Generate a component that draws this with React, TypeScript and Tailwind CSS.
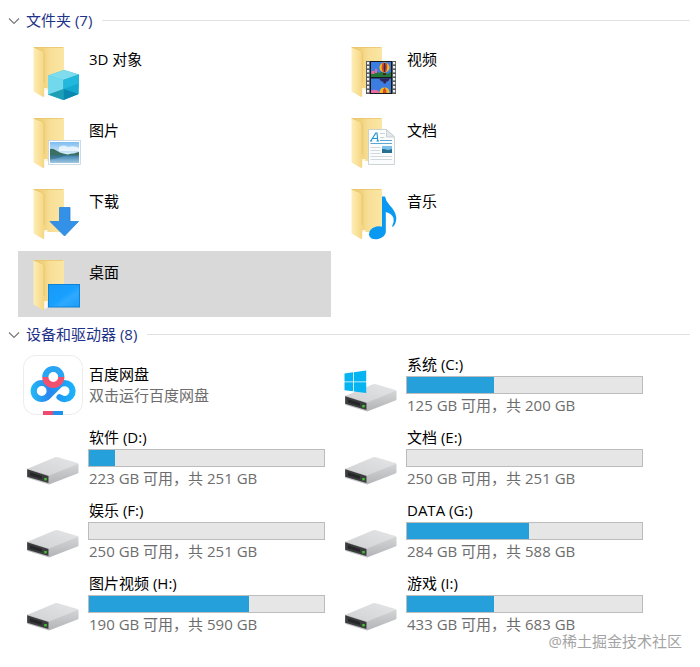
import { useState, type ReactNode } from 'react';

type Folder = { name: string; overlay: ReactNode; selected?: boolean };
type Drive = { name: string; free: number; total: number; used: number; system?: boolean };

function FolderIcon({ children }: { children: ReactNode }) {
  return (
    <svg viewBox="0 0 60 66" className="h-[66px] w-[60px] shrink-0" aria-hidden="true">
      <defs>
        <linearGradient id="folderBack" x1="0" y1="0" x2="1" y2="0">
          <stop offset=".3" stopColor="#f1d27c" />
          <stop offset=".55" stopColor="#f8df98" />
          <stop offset="1" stopColor="#fbe6a4" />
        </linearGradient>
        <linearGradient id="folderFlap" x1="0" y1="0" x2="1" y2="0">
          <stop offset="0" stopColor="#fdedb8" />
          <stop offset=".45" stopColor="#fae29b" />
          <stop offset="1" stopColor="#f4d27c" />
        </linearGradient>
      </defs>
      <path d="M11 9h29.200a.8.8 0 0 1 .8.8V52H11z" fill="url(#folderBack)" />
      <path d="M11 9h29.200v.8H12z" fill="#e8c56b" />
      <path d="M20 50h4.500v6.500l-3.500 2z" fill="#fff" opacity=".8" />
      <path d="M10.500 9.200 19 12.500q2.200 1 2.200 3V45q0 1.500 1.300 2.500-1.300 1.500-1.300 3V58q0 1.600-1.500.8l-8.300-4.700q-.9-.5-.9-1.600z" fill="url(#folderFlap)" />
      <path d="M10.500 9.200 19 12.500q2.200 1 2.200 3V45" fill="none" stroke="#e6c266" strokeWidth=".7" />
      {children}
    </svg>
  );
}

function CubeOverlay() {
  return (
    <g>
      <path d="M25 37.500 41 32l15 4.500L55.500 56 40 62 25 56.500z" fill="#35bfdc" />
      <path d="M25 37.500 41 32l15 4.500L40.500 42z" fill="#7fdcec" />
      <path d="M25 37.500 40.500 42v20L25 56.500z" fill="#72d8ec" />
      <path d="M40.500 42 56 36.500 55.500 56l-15 6z" fill="#12a8cf" />
      <path d="M25 56.500 40.500 51v11z" fill="#1c9eb4" />
      <path d="M40.500 51 55.500 56l-15 6z" fill="#0a87ae" />
      <path d="M40.500 42 56 36.500v9L40.500 51z" fill="#22b7dc" />
    </g>
  );
}

function PictureOverlay() {
  return (
    <g>
      <defs>
        <linearGradient id="sky" x1="0" y1="0" x2="0" y2="1">
          <stop offset="0" stopColor="#7dbdf0" />
          <stop offset="1" stopColor="#dcf0fb" />
        </linearGradient>
        <linearGradient id="lake" x1="0" y1="0" x2="0" y2="1">
          <stop offset="0" stopColor="#3f84b0" />
          <stop offset="1" stopColor="#9fc9e4" />
        </linearGradient>
      </defs>
      <rect x="25.500" y="31.500" width="32" height="24" fill="#fff" stroke="#c3d3dc" strokeWidth=".8" />
      <rect x="27" y="33" width="29" height="13" fill="url(#sky)" />
      <path d="M36 38q5-3 9 0 6-2 11 1v3H36z" fill="#fff" opacity=".7" />
      <path d="M27 47v-7q3-1 5 .8l5 2.700q4 1.500 8 2 4-1.500 6-1 3-1.200 5-1.500V47H27z" fill="#3b6f62" />
      <rect x="27" y="46.500" width="29" height="7.500" fill="url(#lake)" />
      <path d="M27 46.500h15q-6 3-15 4z" fill="#2c6078" opacity=".5" />
    </g>
  );
}

function DownloadOverlay() {
  return <path d="M36.500 27.500h10.500V41.500h8.500L41.500 56 27 41.500h9.500z" fill="#3391e8" stroke="#2883d8" strokeWidth=".8" />;
}

function DesktopOverlay() {
  return (
    <g>
      <defs>
        <linearGradient id="screen" x1="0" y1="0" x2="1" y2="1">
          <stop offset="0" stopColor="#1899f8" />
          <stop offset=".5" stopColor="#18a0ff" />
          <stop offset=".65" stopColor="#2fa9ff" />
          <stop offset="1" stopColor="#189cfa" />
        </linearGradient>
      </defs>
      <rect x="25.500" y="33.500" width="31" height="22.500" fill="url(#screen)" stroke="#0f82d3" />
    </g>
  );
}

function Balloon({ y }: { y: number }) {
  return (
    <g transform={`translate(0 ${y})`}>
      <rect x="30" y="0" width="20" height="15" fill="#3b7de0" />
      <path d="M30 11.500q4-3 8-.5 3-2 5 0t7-1v5H30z" fill="#24783a" />
      <path d="M30.500 9h3v3h-3zM34 7h2v4h-2z" fill="#e66aa3" />
      <circle cx="43.500" cy="5.500" r="5" fill="#f2bd20" />
      <path d="M41.500 1q-2 5 .6 9.200h2.800Q47.500 5 45.500 1z" fill="#d8492c" />
      <path d="M43 1q-.8 5 .2 9h.8q1-4 .2-9z" fill="#30275f" />
      <path d="M42 11h3v2h-3z" fill="#48270f" />
    </g>
  );
}

function VideoOverlay() {
  const holes = [25, 29, 33, 37, 41, 45, 49, 53];
  return (
    <g>
      <rect x="25" y="23" width="30" height="33" fill="#575b5e" />
      <rect x="29" y="23" width="22" height="33" fill="#16191d" />
      {holes.map((y) => (
        <g key={y} fill="#f0f2f2">
          <rect x="26" y={y - 1} width="2.200" height="2.400" />
          <rect x="52" y={y - 1} width="2.200" height="2.400" />
        </g>
      ))}
      <Balloon y={24} />
      {/* second frame is cut between two balloons */}
      <rect x="30" y="40.500" width="20" height="14.500" fill="#3b7de0" />
      <path d="M38 40.500h11q-1 2.500-4 3.500v1.500h-2.500V44q-3.500-1-4.500-3.500z" fill="#30275f" />
      <path d="M30 52.500q3-1.500 7 0l2 2.500h-9z" fill="#e66aa3" />
      <path d="M38.500 55q0-5.500 5-5.500t5 5.500z" fill="#f2bd20" />
      <path d="M41.800 55q0-4 1.700-5.500 2 1.500 2 5.500z" fill="#d8492c" />
    </g>
  );
}

function DocumentOverlay() {
  return (
    <g>
      <path d="M27.500 20.500h18L53.500 28v27.500h-26z" fill="#fafcfd" stroke="#c2c9cc" strokeWidth=".8" />
      <path d="M45.500 20.500V28h8z" fill="#e2e7ea" stroke="#c2c9cc" strokeWidth=".8" />
      <path d="m29.800 32 5-8h1.200l.8 8M31.500 29.500h5M29 32h2.200M35.500 32H38" fill="none" stroke="#1e91cd" strokeWidth="1.100" />
      <path d="M39 24.500h5M39 28.500h4.500" stroke="#cbd3d7" />
      <path d="M39 31.500h12M29.500 34.500H51" stroke="#5ba8d3" />
      <path d="M29.500 38.500h10M29.500 41.500h10M29.500 44.500h10M29.500 47.500H51M29.500 50.500H51" stroke="#d2d8db" />
      <rect x="41" y="37" width="10" height="7" fill="#79bfe9" />
      <path d="M41 40q3-.5 5 1 3 0 5-1v4H41z" fill="#276f91" />
    </g>
  );
}

function MusicOverlay() {
  return (
    <path
      d="M41 16.500h3q.8 4.500 4.500 8.500 6.300 6.500 6.800 12.500.2 5.800-3.300 9.300-1 .3-.8-.8 2.200-4.500 1.300-8-1.700-4.500-7.700-6V52q-.5 5-7.500 7-8 1.200-9.300-4-.5-6.500 7.500-8.500 3-.8 5.500.2z"
      fill="#0a99f2"
    />
  );
}

function DriveIcon({ system }: { system?: boolean }) {
  return (
    <svg viewBox="0 0 60 68" className="h-[68px] w-[60px] shrink-0" aria-hidden="true">
      <defs>
        <linearGradient id="driveTop" x1="0" y1="1" x2="1" y2="0">
          <stop offset="0" stopColor="#d0d1d3" />
          <stop offset="1" stopColor="#e4e5e7" />
        </linearGradient>
        <linearGradient id="driveSide" x1="0" y1="0" x2="0" y2="1">
          <stop offset="0" stopColor="#d3d4d6" />
          <stop offset="1" stopColor="#b2b4b7" />
        </linearGradient>
      </defs>
      <path d="M4 44 32 32.300q1.500-.5 3 0L54.500 38q1 .4 1 1.500L26 51z" fill="url(#driveTop)" />
      <path d="M26 50.500 54.500 39q1-.2 1 1v7.200q0 1-1 1.400L26 59.500z" fill="url(#driveSide)" />
      <path d="M4 43.500 26 50.500v9L4.800 53q-.8-.3-.8-1z" fill="#bfc0c2" />
      <path d="M4.200 44.200 25.500 51v7L4.200 51.800z" fill="#3a3c3e" />
      <path d="M7 47.300 19 51v3L7 50.500z" fill="#242627" />
      <rect x="21.300" y="53" width="2.400" height="2.400" fill="#41c92d" />
      {system && (
        <path
          d="M3.500 21.500 12 20.300v9.200H3.500zM12.800 20.200 25.200 18.500v11H12.800zM3.500 30.300H12v9L3.500 38.200zM12.800 30.300h12.400V41l-12.400-1.600z"
          fill="#05b4f1"
        />
      )}
    </svg>
  );
}

function NetdiskIcon() {
  return (
    <svg viewBox="0 0 60 68" className="h-[68px] w-[60px] shrink-0" aria-hidden="true">
      <defs>
        <linearGradient id="cloud" gradientUnits="userSpaceOnUse" x1="8" y1="0" x2="52" y2="0">
          <stop offset="0" stopColor="#22b8f5" />
          <stop offset=".42" stopColor="#2a86f0" />
          <stop offset=".65" stopColor="#1c9bf6" />
          <stop offset="1" stopColor="#1bb4fa" />
        </linearGradient>
      </defs>
      <rect x=".5" y="3.500" width="59" height="59" rx="12" fill="#fff" stroke="#ececec" />
      <g fill="none" stroke="url(#cloud)" strokeWidth="6.200">
        <circle cx="18.700" cy="39" r="8" />
        <path d="M24.500 44.800 36 33.300A8 8 0 1 1 36.500 45.200" strokeLinecap="round" />
        <path d="M22.300 25A8 8 0 0 1 38.300 25" stroke="#2aa5f4" />
      </g>
      <path d="M22.300 25A8 8 0 0 0 38.300 25" fill="none" stroke="#f2506f" strokeWidth="6.200" />
      <path d="M20 59h10v4H20z" fill="#f0496f" />
      <path d="M30 59h10v4H30z" fill="#2090ee" />
    </svg>
  );
}

const folders: Folder[] = [
  { name: '3D 对象', overlay: <CubeOverlay /> },
  { name: '视频', overlay: <VideoOverlay /> },
  { name: '图片', overlay: <PictureOverlay /> },
  { name: '文档', overlay: <DocumentOverlay /> },
  { name: '下载', overlay: <DownloadOverlay /> },
  { name: '音乐', overlay: <MusicOverlay /> },
  { name: '桌面', overlay: <DesktopOverlay />, selected: true },
];

const drives: Drive[] = [
  { name: '系统 (C:)', free: 125, total: 200, used: 37, system: true },
  { name: '软件 (D:)', free: 223, total: 251, used: 11 },
  { name: '文档 (E:)', free: 250, total: 251, used: 0 },
  { name: '娱乐 (F:)', free: 250, total: 251, used: 0 },
  { name: 'DATA (G:)', free: 284, total: 588, used: 52 },
  { name: '图片视频 (H:)', free: 190, total: 590, used: 68 },
  { name: '游戏 (I:)', free: 433, total: 683, used: 37 },
];

function Section({ title, children }: { title: string; children: ReactNode }) {
  const [open, setOpen] = useState(true);
  return (
    <section>
      <h2 className="flex h-[35px] items-center gap-2.5 pl-2 pr-2.5">
        <button
          type="button"
          aria-expanded={open}
          onClick={() => setOpen(!open)}
          className="flex items-center gap-1.5 text-[#1e3287]"
        >
          <svg viewBox="0 0 12 12" className={`h-3 w-3 ${open ? '' : '-rotate-90'}`} aria-hidden="true">
            <path d="M1 3.500 6 8.500 11 3.500" fill="none" stroke="#7a7a7a" strokeWidth="1.200" />
          </svg>
          {title}
        </button>
        <span className="h-px flex-1 bg-[#e2e2e2]" />
      </h2>
      {open && (
        <ul className="grid grid-cols-[repeat(auto-fill,313px)] gap-[5px] pl-[18px]">{children}</ul>
      )}
    </section>
  );
}

function FolderItem({ folder }: { folder: Folder }) {
  return (
    <li className={`flex gap-1.5 pl-[5px] ${folder.selected ? 'bg-[#d9d9d9]' : ''}`}>
      <FolderIcon>{folder.overlay}</FolderIcon>
      <span className="pt-[11px]">{folder.name}</span>
    </li>
  );
}

function DriveItem({ drive }: { drive: Drive }) {
  return (
    <li className="flex gap-[5px] pl-[5px] pr-1.5">
      <DriveIcon system={drive.system} />
      <div className="flex-1 pt-0.5">
        <p className="pl-px">{drive.name}</p>
        <div
          role="meter"
          aria-label={drive.name}
          aria-valuemin={0}
          aria-valuemax={100}
          aria-valuenow={drive.used}
          className="mt-px mb-px h-[18px] border border-[#bcbcbc] bg-[#e6e6e6]"
        >
          <div className="h-full bg-[#26a0da]" style={{ width: `${drive.used}%` }} />
        </div>
        <p className="pl-px text-[#6d6d6d]">
          {drive.free} GB 可用，共 {drive.total} GB
        </p>
      </div>
    </li>
  );
}

export default function App() {
  return (
    <main
      lang="zh-CN"
      className="relative min-h-screen bg-white pt-[3px] pb-7 font-['Open_Sans','Noto_Sans_CJK_SC',sans-serif] text-[15px] leading-[21px] text-black"
    >
      <Section title="文件夹 (7)">
        {folders.map((f) => (
          <FolderItem key={f.name} folder={f} />
        ))}
      </Section>

      <Section title="设备和驱动器 (8)">
        <li className="flex gap-1.5 pl-[5px]">
          <NetdiskIcon />
          <div className="pt-3">
            <p>百度网盘</p>
            <p className="text-[#6d6d6d]">双击运行百度网盘</p>
          </div>
        </li>
        {drives.map((d) => (
          <DriveItem key={d.name} drive={d} />
        ))}
      </Section>

      {/* Watermark */}
      <p className="absolute right-[18px] bottom-[18px] leading-4 text-[#a3a3a3]">@稀土掘金技术社区</p>
    </main>
  );
}
